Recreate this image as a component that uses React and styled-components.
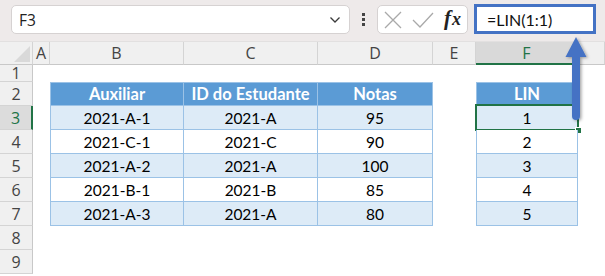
import React from "react";
import styled, { createGlobalStyle, css } from "styled-components";

const GlobalStyle = createGlobalStyle`
  html, body {
    margin: 0;
    padding: 0;
    background: #ffffff;
  }
  * {
    box-sizing: border-box;
  }
`;

const columns = ["A", "B", "C", "D", "E", "F"];

const header = ["Auxiliar", "ID do Estudante", "Notas", "LIN"];

const data = [
  ["2021-A-1", "2021-A", "95", "1"],
  ["2021-C-1", "2021-C", "90", "2"],
  ["2021-A-2", "2021-A", "100", "3"],
  ["2021-B-1", "2021-B", "85", "4"],
  ["2021-A-3", "2021-A", "80", "5"],
];

function App() {
  const emptyRow = (n) => (
    <React.Fragment key={n}>
      <RowHead>{n}</RowHead>
      {Array.from({ length: 7 }).map((_, i) => (
        <Cell key={i} />
      ))}
    </React.Fragment>
  );

  return (
    <Frame>
      <GlobalStyle />
      <Toolbar>
        <NameBox>
          <NameText>F3</NameText>
          <svg width="12" height="8" viewBox="0 0 12 8">
            <path d="M1.5 1.5 L6 6 L10.5 1.5" fill="none" stroke="#3a3a3a" strokeWidth="1.3" />
          </svg>
        </NameBox>
        <Dots>
          <i />
          <i />
          <i />
        </Dots>
        <FxBox>
          <svg width="20" height="20" viewBox="0 0 20 20">
            <path d="M2 2 L18 18 M18 2 L2 18" stroke="#a9a9a9" strokeWidth="1.3" fill="none" />
          </svg>
          <svg width="22" height="20" viewBox="0 0 22 20">
            <path d="M1 10 L8 17 L21 3" stroke="#a9a9a9" strokeWidth="1.3" fill="none" />
          </svg>
          <FxLabel>
            f<span>x</span>
          </FxLabel>
        </FxBox>
        <FormulaBox>=LIN(1:1)</FormulaBox>
      </Toolbar>

      <Sheet>
        <Corner>
          <svg width="30" height="20" viewBox="0 0 30 20">
            <polygon points="28,2 28,18 12,18" fill="#d9d9d9" />
          </svg>
        </Corner>
        {columns.map((c) => (
          <ColHead key={c} $active={c === "F"}>
            {c}
          </ColHead>
        ))}
        <ColHead />

        {emptyRow(1)}

        <RowHead>2</RowHead>
        <Cell />
        <Cell $kind="head" $left $top>{header[0]}</Cell>
        <Cell $kind="head" $top>{header[1]}</Cell>
        <Cell $kind="head" $top>{header[2]}</Cell>
        <Cell />
        <Cell $kind="head" $left $top>{header[3]}</Cell>
        <Cell />

        {data.map((r, i) => {
          const kind = i % 2 === 0 ? "band" : "plain";
          const rowNum = i + 3;
          return (
            <React.Fragment key={rowNum}>
              <RowHead $active={rowNum === 3}>{rowNum}</RowHead>
              <Cell />
              <Cell $kind={kind} $left>{r[0]}</Cell>
              <Cell $kind={kind}>{r[1]}</Cell>
              <Cell $kind={kind}>{r[2]}</Cell>
              <Cell />
              <Cell $kind={kind} $left>
                {r[3]}
                {rowNum === 3 && (
                  <Selection>
                    <FillHandle />
                  </Selection>
                )}
              </Cell>
              <Cell />
            </React.Fragment>
          );
        })}

        {emptyRow(8)}
        {emptyRow(9)}
      </Sheet>

      <Arrow width="40" height="100" viewBox="0 0 40 100">
        <defs>
          <filter id="sh" x="-50%" y="-20%" width="200%" height="140%">
            <feDropShadow dx="1.5" dy="1" stdDeviation="1.5" floodColor="#000" floodOpacity="0.35" />
          </filter>
        </defs>
        <g filter="url(#sh)">
          <rect x="12" y="18" width="8" height="67" rx="4" fill="#4472c4" />
          <polygon points="5.5,22 26.5,22 16,2" fill="#4472c4" />
        </g>
      </Arrow>
    </Frame>
  );
}

export default App;

const Frame = styled.div`
  position: relative;
  width: 605px;
  height: 276px;
  overflow: hidden;
  background: #ffffff;
`;

const Toolbar = styled.div`
  display: flex;
  align-items: flex-start;
  height: 42px;
  padding: 5px 0 0 11px;
  background: #eeeaea;
  border-bottom: 1px solid #e2e0e0;
`;

const boxBase = css`
  height: 29px;
  background: #ffffff;
  border: 1px solid #d6d2d2;
  border-radius: 5px;
`;

const NameBox = styled.div`
  ${boxBase}
  width: 339px;
  display: flex;
  align-items: center;
  justify-content: space-between;
  padding: 0 8px 0 7px;
`;

const NameText = styled.span`
  font-family: "Open Sans", "Noto Sans", sans-serif;
  font-size: 15.5px;
  color: #222;
`;

const Dots = styled.div`
  width: 27px;
  height: 29px;
  display: flex;
  flex-direction: column;
  align-items: center;
  justify-content: center;
  gap: 2px;

  i {
    display: block;
    width: 3px;
    height: 3px;
    background: #444;
  }
`;

const FxBox = styled.div`
  ${boxBase}
  width: 91px;
  display: flex;
  align-items: center;
  gap: 9px;
  padding: 0 0 0 5px;

  svg {
    flex-shrink: 0;
  }
`;

const FxLabel = styled.span`
  font-family: "Liberation Serif", "DejaVu Serif", serif;
  font-style: italic;
  font-weight: bold;
  font-size: 21px;
  line-height: 1;
  color: #222;
  margin: -2px 0 0 1px;

  span {
    font-size: 18px;
    margin-left: 1px;
  }
`;

const FormulaBox = styled.div`
  width: 122px;
  height: 30px;
  margin: -1px 0 0 6px;
  border: 3px solid #4472c4;
  background: #ffffff;
  display: flex;
  align-items: center;
  padding-left: 10px;
  font-family: "Lato", "Liberation Sans", sans-serif;
  font-size: 16px;
  color: #111;
`;

const Sheet = styled.div`
  display: grid;
  grid-template-columns: 33px 17px 134px 134px 115px 43px 102px 1fr;
  grid-template-rows: 23px 17px repeat(8, 24px);
`;

const headerText = css`
  font-family: "Open Sans", "Noto Sans", sans-serif;
  font-size: 16px;
  color: #444;
  display: flex;
  align-items: center;
  justify-content: center;
  background: #f0f0f0;
`;

const Corner = styled.div`
  ${headerText}
  border-right: 1px solid #d4d4d4;
  border-bottom: 1px solid #c8c8c8;
  align-items: flex-end;
  justify-content: flex-end;
`;

const ColHead = styled.div`
  ${headerText}
  border-right: 1px solid #d4d4d4;
  border-bottom: 1px solid #c8c8c8;

  ${(p) =>
    p.$active &&
    css`
      background: #d9d9d9;
      color: #217346;
      border-bottom: 2px solid #217346;
    `}
`;

const RowHead = styled.div`
  ${headerText}
  border-right: 1px solid #c8c8c8;
  border-bottom: 1px solid #d4d4d4;

  ${(p) =>
    p.$active &&
    css`
      background: #dcdcdc;
      color: #217346;
      border-right: 2px solid #217346;
    `}
`;

const kinds = {
  head: css`
    background: #5b9bd5;
    color: #ffffff;
    font-weight: bold;
    font-size: 16.5px;
  `,
  band: css`
    background: #ddebf7;
    color: #000;
  `,
  plain: css`
    background: #ffffff;
    color: #000;
  `,
};

const Cell = styled.div`
  position: relative;
  display: flex;
  align-items: center;
  justify-content: center;
  font-family: "Lato", "Liberation Sans", sans-serif;
  font-size: 15.5px;

  ${(p) =>
    p.$kind &&
    css`
      ${kinds[p.$kind]}
      border-right: 1px solid #9bc2e6;
      border-bottom: 1px solid #9bc2e6;
      ${p.$left && "border-left: 1px solid #9bc2e6;"}
      ${p.$top && "border-top: 1px solid #9bc2e6;"}
    `}
`;

const Selection = styled.div`
  position: absolute;
  left: -2px;
  right: -2px;
  top: -2px;
  bottom: -2px;
  border: 2px solid #217346;
  pointer-events: none;
`;

const FillHandle = styled.div`
  position: absolute;
  right: -5px;
  bottom: -5px;
  width: 7px;
  height: 7px;
  background: #217346;
  border: 1px solid #ffffff;
`;

const Arrow = styled.svg`
  position: absolute;
  left: 560px;
  top: 35px;
`;
